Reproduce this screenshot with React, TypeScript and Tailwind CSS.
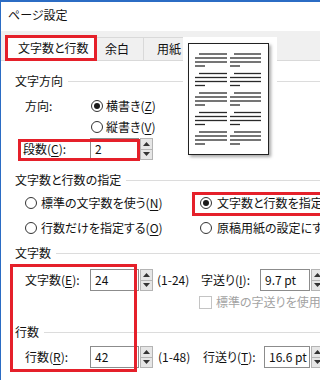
import React from "react";

function Radio({ checked = false }: { checked?: boolean }) {
  return (
    <span className="flex h-[12px] w-[12px] shrink-0 items-center justify-center rounded-full border border-[#333] bg-white">
      {checked && <span className="h-[6px] w-[6px] rounded-full bg-[#1a1a1a]" />}
    </span>
  );
}

function Spinner() {
  return (
    <div className="ml-[1px] flex h-[22px] w-[13px] shrink-0 flex-col border border-[#b4b4b4] bg-[#e6e6e6]">
      <div className="flex flex-1 items-center justify-center border-b border-[#b4b4b4]">
        <svg width="7" height="4" viewBox="0 0 7 4">
          <path d="M0 4 L3.5 0 L7 4 Z" fill="#333" />
        </svg>
      </div>
      <div className="flex flex-1 items-center justify-center">
        <svg width="7" height="4" viewBox="0 0 7 4">
          <path d="M0 0 L7 0 L3.5 4 Z" fill="#333" />
        </svg>
      </div>
    </div>
  );
}

function Field({ value, width }: { value: string; width: string }) {
  return (
    <div className={`flex h-[22px] shrink-0 items-center border border-[#8c8c8c] bg-white pl-[4px] ${width}`}>
      {value}
    </div>
  );
}

function Header({ title }: { title: string }) {
  return (
    <div className="flex h-[20px] items-center pl-[14px]">
      <span className="whitespace-nowrap">{title}</span>
      <div className="ml-[5px] h-px flex-1 bg-[#dcdcdc]" />
    </div>
  );
}

// preview page: 5 groups, 2 columns
const groups = [10, 29.5, 49, 68.5, 88];

function PagePreview() {
  return (
    <svg width="79" height="110" viewBox="0 0 79 110">
      {groups.map((y) => (
        <g key={y} stroke="#2a2a2a" strokeWidth="1.3">
          <line x1="10" y1={y} x2="38" y2={y} />
          <line x1="6" y1={y + 4} x2="38" y2={y + 4} />
          <line x1="6" y1={y + 8} x2="38" y2={y + 8} />
          <line x1="6" y1={y + 12} x2="16" y2={y + 12} />
          <line x1="45" y1={y} x2="72" y2={y} />
          <line x1="41" y1={y + 4} x2="72" y2={y + 4} />
          <line x1="41" y1={y + 8} x2="72" y2={y + 8} />
          <line x1="41" y1={y + 12} x2="51" y2={y + 12} />
        </g>
      ))}
    </svg>
  );
}

export default function App() {
  return (
    <div className="relative h-[380px] w-[320px] overflow-hidden border-l border-t-2 border-[#2b6cc4] bg-white font-['Noto_Sans_CJK_JP','Noto_Sans',sans-serif] text-[12px] leading-none text-[#111] [font-feature-settings:'palt']">
      {/* title bar */}
      <div className="h-[29px] pl-[7px] pt-[7px]">ページ設定</div>

      {/* tabs */}
      <div className="flex h-[30px] items-end border-b border-[#d9d9d9] bg-[#f0f0f0] pl-[4px]">
        <div className="relative z-10 -mb-px flex h-[26px] w-[92px] items-center border-[3px] border-[#e5202a] bg-white pl-[10px]">
          文字数と行数
        </div>
        <div className="flex h-[23px] w-[47px] items-center border-r border-t border-[#d9d9d9] pl-[8px]">余白</div>
        <div className="flex h-[23px] w-[50px] items-center border-r border-t border-[#d9d9d9] pl-[13px]">用紙</div>
      </div>

      {/* content */}
      <div className="flex flex-col pt-[10px]">
        <Header title="文字方向" />
        <div className="mt-[4px] flex h-[22px] items-center pl-[24px]">
          <span className="w-[66px] shrink-0">方向:</span>
          <Radio checked />
          <span className="ml-[3px]">
            横書き(<u className="underline-offset-2">Z</u>)
          </span>
        </div>
        <div className="flex h-[20px] items-center pl-[90px]">
          <Radio />
          <span className="ml-[3px]">
            縦書き(<u className="underline-offset-2">V</u>)
          </span>
        </div>
        <div className="mt-px flex h-[22px] items-center pl-[22px]">
          <span className="w-[67px] shrink-0">
            段数(<u className="underline-offset-2">C</u>):
          </span>
          <Field value="2" width="w-[49px]" />
          <Spinner />
        </div>

        <div className="mt-[10px]">
          <Header title="文字数と行数の指定" />
        </div>
        <div className="mt-[2px] flex h-[22px] items-center pl-[24px] whitespace-nowrap">
          <div className="flex w-[175px] shrink-0 items-center">
            <Radio />
            <span className="ml-[4px]">
              標準の文字数を使う(<u className="underline-offset-2">N</u>)
            </span>
          </div>
          <Radio checked />
          <span className="ml-[5px] shrink-0">文字数と行数を指定する(H)</span>
        </div>
        <div className="mt-[3px] flex h-[22px] items-center pl-[24px] whitespace-nowrap">
          <div className="flex w-[175px] shrink-0 items-center">
            <Radio />
            <span className="ml-[4px]">
              行数だけを指定する(<u className="underline-offset-2">O</u>)
            </span>
          </div>
          <Radio />
          <span className="ml-[5px] shrink-0">原稿用紙の設定にする(X)</span>
        </div>

        <div className="mt-[4px]">
          <Header title="文字数" />
        </div>
        <div className="mt-[6px] flex h-[22px] items-center pl-[24px] whitespace-nowrap">
          <span className="w-[65px] shrink-0">
            文字数(<u className="underline-offset-2">E</u>):
          </span>
          <Field value="24" width="w-[49px]" />
          <Spinner />
          <span className="w-[48px] shrink-0 pl-[4px]">(1-24)</span>
          <span className="w-[59px] shrink-0">
            字送り(<u className="underline-offset-2">I</u>):
          </span>
          <Field value="9.7 pt" width="w-[50px]" />
          <Spinner />
        </div>
        <div className="mt-px flex h-[20px] items-center pl-[198px] whitespace-nowrap text-[#a3a3a3]">
          <span className="h-[13px] w-[13px] shrink-0 border border-[#c4c4c4] bg-white" />
          <span className="ml-[4px] shrink-0">標準の字送りを使用する(A)</span>
        </div>

        <div className="mt-[10px]">
          <Header title="行数" />
        </div>
        <div className="mt-[4px] flex h-[22px] items-center pl-[24px] whitespace-nowrap">
          <span className="w-[65px] shrink-0">
            行数(<u className="underline-offset-2">R</u>):
          </span>
          <Field value="42" width="w-[49px]" />
          <Spinner />
          <span className="w-[50px] shrink-0 pl-[5px]">(1-48)</span>
          <span className="w-[61px] shrink-0">
            行送り(<u className="underline-offset-2">T</u>):
          </span>
          <Field value="16.6 pt" width="w-[46px]" />
          <Spinner />
        </div>
      </div>

      {/* page preview over tabs and content */}
      <div className="absolute left-[182px] top-[35px] h-[127px] w-[94px] bg-white">
        <div className="ml-[5px] mt-[6px] h-[112px] w-[81px] border border-[#222] bg-white shadow-[2px_2px_3px_rgba(0,0,0,0.35)]">
          <PagePreview />
        </div>
      </div>

      {/* red annotation boxes */}
      <div className="pointer-events-none absolute left-[17px] top-[137px] h-[22px] w-[122px] border-[3px] border-[#e5202a]" />
      <div className="pointer-events-none absolute left-[191px] top-[190px] h-[24px] w-[140px] border-[3px] border-[#e5202a]" />
      <div className="pointer-events-none absolute left-[9px] top-[262px] h-[108px] w-[127px] border-[3px] border-[#e5202a]" />
    </div>
  );
}
